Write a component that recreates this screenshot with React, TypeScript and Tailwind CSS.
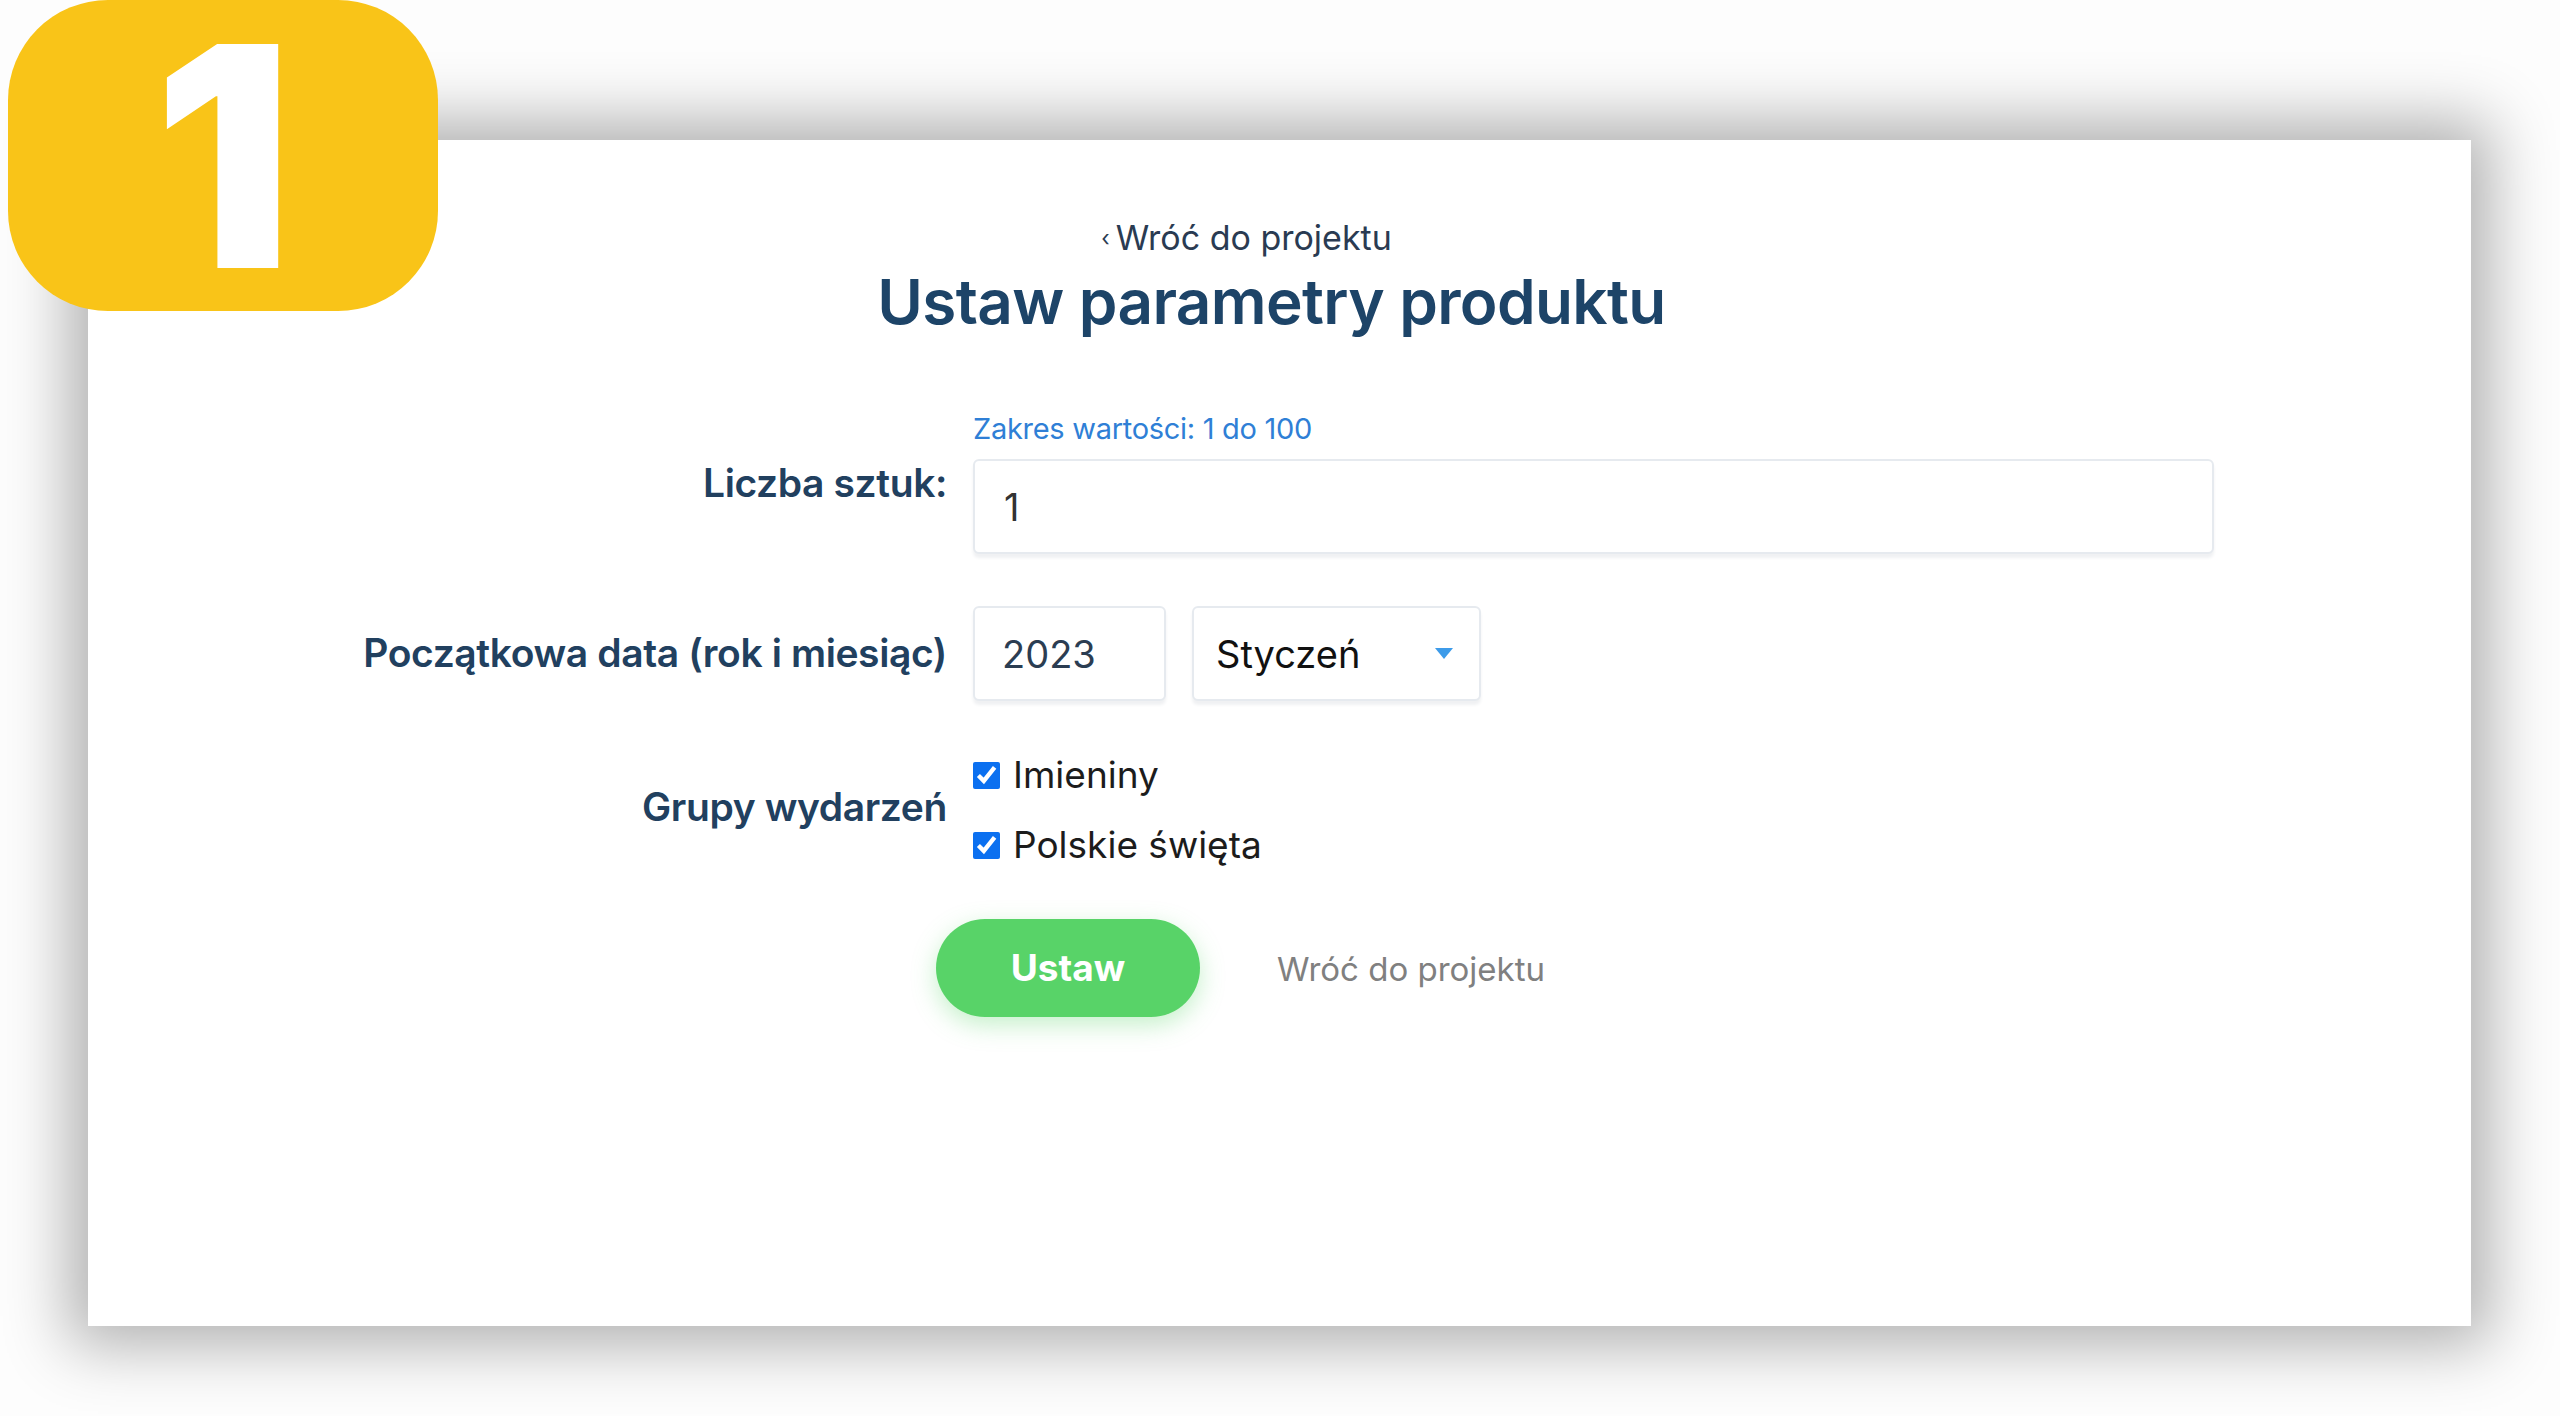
import React from "react";

// Step 1 screenshot: product parameter form on a shadowed card with a numbered badge.
const LABEL = "text-right text-[39px] font-semibold leading-[1.2] tracking-[-0.01em] text-[#21405f]";
const FIELD =
  "flex h-[95px] items-center rounded-[6px] border-2 border-[#e6eaef] bg-white shadow-[0_4px_3px_rgba(40,60,90,0.07)] text-[38px] leading-none";

function Checkbox({ label }: { label: string }) {
  return (
    <label className="flex items-center gap-[13px]">
      <input
        type="checkbox"
        defaultChecked
        className="h-[27px] w-[27px] accent-[#0b70f0]"
      />
      <span className="text-[37px] leading-[1.2] text-[#1c1c1c]">{label}</span>
    </label>
  );
}

export default function App() {
  return (
    <div className="relative h-[1416px] w-full overflow-hidden bg-[#fdfdfd] font-['Inter',sans-serif]">
      <div className="ml-[88px] mt-[140px] h-[1186px] w-[2383px] bg-white shadow-[0_0_60px_20px_rgba(0,0,0,0.3)]">
        <div className="flex flex-col items-center pt-[78px]">
          <a className="mr-[66px] flex items-center gap-[6px] text-[34px] leading-[40px] text-[#2a3b52]">
            <span className="text-[22px]">‹</span>
            <span>Wróć do projektu</span>
          </a>
          <h1 className="mr-[16px] mt-[7px] text-[62px] font-semibold leading-[74px] tracking-[-0.01em] text-[#1d4468]">
            Ustaw parametry produktu
          </h1>
        </div>

        <div className="mt-[74px] grid grid-cols-[859px_1241px] items-center gap-x-[26px]">
          <div className={LABEL}>Liczba sztuk:</div>
          <div className="flex flex-col">
            <span className="text-[29px] leading-[32px] tracking-[-0.01em] text-[#2f7fd6]">
              Zakres wartości: 1 do 100
            </span>
            <div className={`${FIELD} mt-[14px] h-[93px] w-full pl-[29px] text-[#333]`}>1</div>
          </div>

          <div className={`${LABEL} mt-[52px]`}>Początkowa data (rok i miesiąc)</div>
          <div className="mt-[52px] flex gap-[26px]">
            <div className={`${FIELD} w-[193px] pl-[27px] text-[#2b3d52]`}>2023</div>
            <div className={`${FIELD} w-[289px] justify-between pl-[22px] pr-[25px] text-[#111]`}>
              <span>Styczeń</span>
              <svg width="20" height="13" viewBox="0 0 20 13">
                <path d="M1 1h18l-9 11z" fill="#3d9be9" />
              </svg>
            </div>
          </div>

          <div className={`${LABEL} mt-[46px]`}>Grupy wydarzeń</div>
          <div className="mt-[52px] flex flex-col gap-[26px]">
            <Checkbox label="Imieniny" />
            <Checkbox label="Polskie święta" />
          </div>
        </div>

        <div className="mt-[51px] ml-[848px] flex items-center gap-[77px]">
          <button
            type="button"
            className="h-[98px] w-[264px] rounded-full bg-[#58d368] text-[37px] font-bold text-white shadow-[0_8px_24px_rgba(88,211,104,0.35)]"
          >
            Ustaw
          </button>
          <a className="mt-[4px] text-[33px] text-[#808080]">Wróć do projektu</a>
        </div>
      </div>

      <div className="absolute left-[8px] top-0 flex h-[311px] w-[430px] items-center justify-center rounded-[100px] bg-[#f9c418]">
        <span className="text-[308px] font-black leading-none text-white">1</span>
      </div>
    </div>
  );
}
